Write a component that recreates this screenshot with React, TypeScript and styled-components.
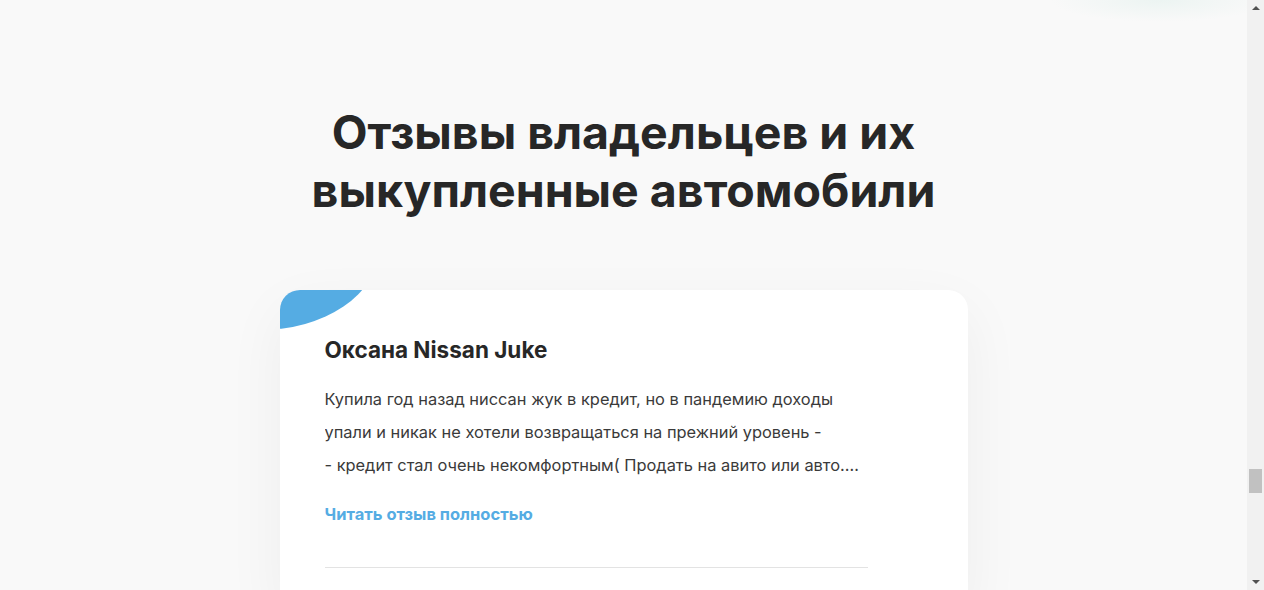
import React from "react";
import styled, { createGlobalStyle } from "styled-components";

const Global = createGlobalStyle`
  html, body { margin: 0; padding: 0; height: 100%; overflow: hidden; }
  body { background: #f9f9f9; font-family: "Inter", "Noto Sans", sans-serif; color: #272727; }
  #root { height: 100%; }
`;

const Shell = styled.div`
  display: flex;
  height: 590px;
  overflow: hidden;
`;

const Page = styled.main`
  flex: 1;
  display: flex;
  flex-direction: column;
  align-items: center;
  background:
    radial-gradient(ellipse 110px 22px at 1160px 0px, rgba(225, 240, 236, 0.55), rgba(249, 249, 249, 0) 100%),
    #f9f9f9;
  padding-top: 103px;
`;

const Title = styled.h2`
  margin: 0;
  font-size: 46.5px;
  line-height: 58px;
  font-weight: 700;
  text-align: center;
  color: #272727;
`;

const Card = styled.article`
  position: relative;
  overflow: hidden;
  margin-top: 71px;
  width: 688px;
  box-sizing: border-box;
  padding: 45px 100px 40px 45px;
  background: #ffffff;
  border-radius: 20px;
  box-shadow: 0 20px 60px rgba(0, 0, 0, 0.05);
  flex-shrink: 0;
`;

const Corner = styled.span`
  position: absolute;
  left: -138px;
  top: -120px;
  width: 236px;
  height: 160px;
  border-radius: 50%;
  background: #55ace3;
`;

const Name = styled.h3`
  margin: 0;
  font-size: 22.5px;
  line-height: 30px;
  font-weight: 700;
  color: #272727;
`;

const Text = styled.p`
  margin: 18px 0 0;
  font-size: 16.4px;
  line-height: 33px;
  color: #3a3a3a;
`;

const Line = styled.span`
  display: block;
  white-space: nowrap;
  overflow: hidden;
  text-overflow: ellipsis;
`;

const ReadMore = styled.a`
  display: block;
  margin-top: 20px;
  font-size: 16.5px;
  line-height: 24px;
  font-weight: 700;
  color: #55ace3;
  text-decoration: none;
`;

const Divider = styled.hr`
  margin: 41px 0 0;
  border: 0;
  height: 1px;
  background: #e3e3e3;
`;

const Track = styled.div`
  width: 17px;
  flex-shrink: 0;
  background: #f1f1f1;
  display: flex;
  flex-direction: column;
  align-items: center;
  justify-content: space-between;
  padding: 6px 0;
  box-sizing: border-box;
`;

const Arrow = styled.span<{ $down?: boolean }>`
  width: 0;
  height: 0;
  border-left: 4px solid transparent;
  border-right: 4px solid transparent;
  ${(p) => (p.$down ? "border-top: 4px solid #505050;" : "border-bottom: 4px solid #505050;")}
`;

const ThumbArea = styled.div`
  flex: 1;
  width: 100%;
  display: flex;
  justify-content: center;
  padding-top: 459px;
`;

const Thumb = styled.div`
  width: 13px;
  height: 24px;
  background: #c1c1c1;
`;

export default function App() {
  return (
    <>
      <Global />
      <Shell>
        <Page>
          <Title>
            Отзывы владельцев и их
            <br />
            выкупленные автомобили
          </Title>
          <Card>
            <Corner />
            <Name>Оксана Nissan Juke</Name>
            <Text>
              <Line>Купила год назад ниссан жук в кредит, но в пандемию доходы</Line>
              <Line>упали и никак не хотели возвращаться на прежний уровень -</Line>
              <Line>- кредит стал очень некомфортным( Продать на авито или авто.ру не получилось</Line>
            </Text>
            <ReadMore href="#">Читать отзыв полностью</ReadMore>
            <Divider />
          </Card>
        </Page>
        <Track>
          <Arrow />
          <ThumbArea>
            <Thumb />
          </ThumbArea>
          <Arrow $down />
        </Track>
      </Shell>
    </>
  );
}
